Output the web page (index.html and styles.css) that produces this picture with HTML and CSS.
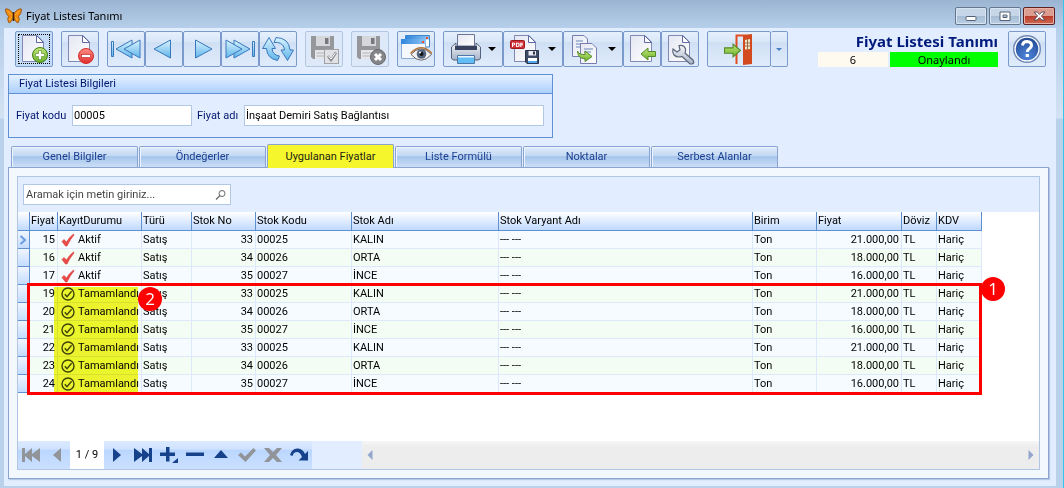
FILE: index.html
```
<!DOCTYPE html>
<html lang="tr">
<head>
<meta charset="utf-8">
<title>Fiyat Listesi Tanımı</title>
<link rel="stylesheet" href="styles.css">
</head>
<body>
<svg class="defs" width="0" height="0" aria-hidden="true">
  <defs>
    <linearGradient id="gArrow" x1="0" y1="0" x2="0" y2="1"><stop offset="0" stop-color="#d9f3ff"/><stop offset="1" stop-color="#5fb4ea"/></linearGradient>
    <linearGradient id="gPage" x1="0" y1="0" x2="1" y2="1"><stop offset="0" stop-color="#e4e6f2"/><stop offset="1" stop-color="#ffffff"/></linearGradient>
    <linearGradient id="gGreen" x1="0" y1="0" x2="0" y2="1"><stop offset="0" stop-color="#c4e878"/><stop offset="1" stop-color="#69b02c"/></linearGradient>
    <linearGradient id="gRed" x1="0" y1="0" x2="0" y2="1"><stop offset="0" stop-color="#ff8f85"/><stop offset="1" stop-color="#e02b2b"/></linearGradient>
    <linearGradient id="gSteel" x1="0" y1="0" x2="0" y2="1"><stop offset="0" stop-color="#f4f6fa"/><stop offset="1" stop-color="#a5b2c6"/></linearGradient>
    <linearGradient id="gWin" x1="0" y1="0" x2="1" y2="0"><stop offset="0" stop-color="#2f86dc"/><stop offset="1" stop-color="#8cc4f4"/></linearGradient>
    <radialGradient id="gHelp" cx=".5" cy=".8" r=".8"><stop offset="0" stop-color="#4f86dc"/><stop offset="1" stop-color="#234a94"/></radialGradient>
    <symbol id="page" viewBox="0 0 32 32"><path d="M4.500 2.500H19L25.500 9V28.500H4.500Z" fill="url(#gPage)" stroke="#8288b4"/><path d="M18.500 2.500V9.500H25.500Z" fill="#fff" stroke="#5f69a8" stroke-linejoin="round"/></symbol>
    <symbol id="arrowL" viewBox="0 0 16 14"><path d="M1 7L8 1V4.500H15.500V9.500H8V13Z" fill="url(#gGreen)" stroke="#528a2c"/></symbol>
    <symbol id="arrowR" viewBox="0 0 16 14"><path d="M15.500 7L8.500 1V4.500H.5V9.500H8.500V13Z" fill="url(#gGreen)" stroke="#528a2c"/></symbol>
    <symbol id="floppyGray" viewBox="0 0 32 32"><path d="M3 3H26V26H5L3 24Z" fill="#96979b"/><path d="M8 3H22V13H8Z" fill="#d5d7db"/><path d="M17 5H20.500V11H17Z" fill="#77787e"/><path d="M7 17H22V26H7Z" fill="#e4e6ea"/><path d="M8.500 20H20M8.500 23H20" stroke="#b4b6ba"/></symbol>
    <symbol id="redCheck" viewBox="0 0 14 14"><path d="M1 8.500L3 6.500L5.500 9Q8.500 4 12.500 1L13 2Q9 6.500 6 13H4.500Z" fill="#ea4a48" stroke="#d93a3a" stroke-width=".6"/></symbol>
    <symbol id="ringCheck" viewBox="0 0 14 14"><circle cx="7" cy="7" r="6" fill="none" stroke="#40451a" stroke-width="1.400"/><path d="M3.800 7.200L6 9.700L10.600 4.300" fill="none" stroke="#40451a" stroke-width="1.400"/></symbol>
  </defs>
</svg>

<div class="window">
  <header class="titlebar">
    <svg class="logo" viewBox="0 0 17 16"><path d="M8.500 6Q4 0 .5 1Q0 5 3.500 8.500Q1.500 11 4 15Q7 14 8.500 9Q10 14 13 15Q15.500 11 13.500 8.500Q17 5 16.500 1Q13 0 8.500 6Z" fill="#f28a10" stroke="#8a5214" stroke-width=".8"/><path d="M2.500 3L7 7M14.500 3L10 7M4.500 12L7 9M12.500 12L10 9" stroke="#ffb03a"/><path d="M8.500 4V13" stroke="#3a2208" stroke-width="1.500"/></svg>
    <h1 class="title">Fiyat Listesi Tanımı</h1>
    <div class="controls">
      <button class="ctl" aria-label="Simge durumuna küçült"><svg width="12" height="14" viewBox="0 0 12 14"><rect x="1" y="7.500" width="10" height="4" rx="1" fill="#fff" stroke="#566274"/></svg></button>
      <button class="ctl" aria-label="Ekranı kapla"><svg width="12" height="14" viewBox="0 0 12 14"><path d="M1 3H11V11.500H1ZM4 6V8.500H8V6Z" fill="#fff" fill-rule="evenodd" stroke="#566274"/></svg></button>
      <button class="ctl ctl-close" aria-label="Kapat"><svg width="13" height="14" viewBox="0 0 13 14"><path d="M1 3H4.200L6.500 5.300L8.800 3H12L8.500 7L12 11H8.800L6.500 8.700L4.200 11H1L4.500 7Z" fill="#fff" stroke="#5c4a56"/></svg></button>
    </div>
  </header>

  <main class="body">
    <div class="toolbar">
      <div class="group"><button class="tool focused" aria-label="Yeni"><svg viewBox="0 0 32 32"><use href="#page"/><circle cx="22" cy="22" r="7.500" fill="url(#gGreen)" stroke="#3f7d18"/><path d="M20.500 17.500H23.500V20.500H26.500V23.500H23.500V26.500H20.500V23.500H17.500V20.500H20.500Z" fill="#fff" stroke="#4d8a20" stroke-width=".6"/></svg></button></div>
      <div class="group"><button class="tool" aria-label="Sil"><svg viewBox="0 0 32 32"><use href="#page"/><circle cx="22" cy="23" r="7.500" fill="url(#gRed)" stroke="#d12c2c"/><rect x="17.500" y="21.500" width="9" height="3" fill="#fff" stroke="#b32020" stroke-width=".6"/></svg></button></div>
      <div class="group">
        <button class="tool" aria-label="İlk kayıt"><svg viewBox="0 0 32 32"><g fill="url(#gArrow)" stroke="#3a78bc"><path d="M1.500 8.500H3.500V23.500H1.500Z"/><path d="M22 7V25L6 16Z"/><path d="M30 7V25L14 16Z"/></g></svg></button>
        <button class="tool" aria-label="Önceki"><svg viewBox="0 0 32 32"><path d="M22.500 7V25L6 16Z" fill="url(#gArrow)" stroke="#3a78bc"/></svg></button>
        <button class="tool" aria-label="Sonraki"><svg viewBox="0 0 32 32"><path d="M9.500 7V25L26 16Z" fill="url(#gArrow)" stroke="#3a78bc"/></svg></button>
        <button class="tool" aria-label="Son kayıt"><svg viewBox="0 0 32 32"><g fill="url(#gArrow)" stroke="#3a78bc"><path d="M28.500 8.500H30.500V23.500H28.500Z"/><path d="M10 7V25L26 16Z"/><path d="M2 7V25L18 16Z"/></g></svg></button>
        <button class="tool" aria-label="Yenile"><svg viewBox="0 0 32 32"><g fill="url(#gArrow)" stroke="#3a78bc"><path d="M7 4.500L13.500 15.500H10Q10.500 22 17.500 23L15.500 27.500Q5 25.500 4.500 15.500H.5Z"/><path d="M25.500 27.500L19 17H22.500Q22 10.500 15.500 9.500H12L14 4.500Q27 5 28 17H31.500Z"/></g></svg></button>
      </div>
      <div class="group"><button class="tool" disabled aria-label="Kaydet"><svg viewBox="0 0 32 32"><use href="#floppyGray"/><rect x="16.500" y="16.500" width="14" height="14" fill="#e0e2e6" stroke="#a0a2a6"/><path d="M20 23L23 27L28 19.500" fill="none" stroke="#8b8d92" stroke-width="2.500"/><path d="M20.500 23L23 26L27.500 20" fill="none" stroke="#fff"/></svg></button></div>
      <div class="group"><button class="tool" disabled aria-label="Vazgeç"><svg viewBox="0 0 32 32"><use href="#floppyGray"/><circle cx="24" cy="24" r="7.500" fill="#85868a" stroke="#68696e"/><path d="M21 21L27 27M27 21L21 27" stroke="#fff" stroke-width="3"/></svg></button></div>
      <div class="group"><button class="tool" aria-label="İzle"><svg viewBox="0 0 32 32"><path d="M5.500 2.500H29.500V14H5.500Z" fill="#fff" stroke="#3d85ca"/><path d="M6 3H29V6.500H6Z" fill="url(#gWin)"/><path d="M1.500 6.500H25.500V25.500H1.500Z" fill="#f4f8fd" stroke="#8cacd6"/><path d="M1 6H26V11H1Z" fill="url(#gWin)"/><path d="M22 8H24V10H22ZM26 4H28V6H26Z" fill="#e6502a"/><path d="M11 21.500Q21 10 31.500 21.500Q21 33 11 21.500Z" fill="#f3f2f2" stroke="#6f6870"/><path d="M10.500 20.500Q21 9 32 20.500" fill="none" stroke="#b3753a" stroke-width="1.500"/><circle cx="21.500" cy="21" r="4.800" fill="#52647e"/><circle cx="21.500" cy="21" r="2" fill="#111"/><circle cx="20" cy="19.500" r="1" fill="#fff"/></svg></button></div>
      <div class="group">
        <button class="tool drop" aria-label="Yazdır"><svg viewBox="0 0 32 32"><path d="M1.500 14L6 10V15H26V10L30.500 14V25Q30 27 28 27H4Q2 27 1.500 25Z" fill="url(#gSteel)" stroke="#56617e"/><path d="M7.500 1.500H24.500V13H7.500Z" fill="url(#gPage)" stroke="#6c7694"/><path d="M5 13H27V17H5Z" fill="#38425e"/><path d="M7.500 22.500H24.500V30.500H7.500Z" fill="#63bdf5" stroke="#4f77a8"/><path d="M8 23H24V24.500H8Z" fill="#e8f4ff"/></svg><i class="caret"></i></button>
        <button class="tool drop" aria-label="PDF kaydet"><svg viewBox="0 0 32 32"><use href="#page"/><rect x=".5" y="7.500" width="14" height="8" rx="1" fill="#cf2f34" stroke="#9c1b20"/><text class="pdf" x="7.500" y="14">PDF</text><path d="M15.500 17.500H28.500V30.500H17L15.500 29Z" fill="#3e4964" stroke="#2b344c"/><path d="M18.500 18H26V22.500H18.500Z" fill="#e8ebf2"/><path d="M23 18.500H25V21.500H23Z" fill="#2b344c"/><path d="M18 25H27V30H18Z" fill="#fff"/><path d="M18 28H27V30H18Z" fill="#49a8ee"/></svg><i class="caret"></i></button>
        <button class="tool drop" aria-label="Kopyala"><svg viewBox="0 0 32 32"><path d="M2.500 2.500H14L17.500 6V23.500H2.500Z" fill="url(#gPage)" stroke="#777eae"/><path d="M6 8H13M6 11H12M6 14H10" stroke="#6a87b8"/><path d="M10.500 10.500H22L26.500 15V30.500H10.500Z" fill="url(#gPage)" stroke="#777eae"/><path d="M14 16H23M14 19H21" stroke="#6a87b8"/><path d="M7.500 18Q9 22 15 21.500V18L22 23.500L15 28.500V25.500Q8 26 7.500 18Z" fill="url(#gGreen)" stroke="#528a2c"/></svg><i class="caret"></i></button>
        <button class="tool" aria-label="İçe aktar"><svg viewBox="0 0 32 32"><use href="#page"/><use href="#arrowL" x="14" y="14" width="16" height="14"/></svg></button>
        <button class="tool" aria-label="Ayarlar"><svg viewBox="0 0 32 32"><use href="#page"/><path d="M9 16L13 19L16 17L15 12.500Q20 11.500 21.500 16Q22 18 21 20L29 27Q31 30 28 31H26L18 23.500Q13 25 10 22Q8 19 9 16Z" fill="url(#gSteel)" stroke="#5c667a" stroke-width="1.200"/></svg></button>
      </div>
      <div class="group split">
        <button class="tool exit" aria-label="Çıkış"><svg viewBox="0 0 32 32"><path d="M13.500 31V2.500H29" fill="none" stroke="#e04d20" stroke-width="2"/><path d="M20 3L29 1V31L20 32Z" fill="#d34a1e"/><path d="M22 7L27 6V16L22 16.500Z" fill="#f1e8c6"/><path d="M24.500 6V16.500M22 10H27M22 13H27" stroke="#9b6a4a"/><use href="#arrowR" x="1" y="10" width="17" height="15"/></svg></button>
        <button class="tool more" aria-label="Çıkış seçenekleri"><i class="caret small"></i></button>
      </div>
      <div class="status">
        <h2 class="heading">Fiyat Listesi Tanımı</h2>
        <div class="tags"><span class="tag count">6</span><span class="tag approved">Onaylandı</span></div>
      </div>
      <div class="group"><button class="tool" aria-label="Yardım"><svg viewBox="0 0 32 32"><circle cx="16" cy="16" r="13.300" fill="#fff" stroke="#6e86b4" stroke-width="1.400"/><circle cx="16" cy="16" r="11.300" fill="url(#gHelp)"/><path d="M11.500 12.500Q12 8.500 16 8.500Q20.500 8.800 20.500 12.500Q20.300 14.500 18 16Q16.300 17 16.300 19" fill="none" stroke="#fff" stroke-width="3"/><rect x="14.700" y="21" width="3.200" height="3" fill="#fff"/></svg></button></div>
    </div>

    <section class="info">
      <h3 class="info-title">Fiyat Listesi Bilgileri</h3>
      <div class="fields">
        <label class="label-code" for="kod">Fiyat kodu</label><input class="field code" id="kod" value="00005">
        <label class="label-name" for="ad">Fiyat adı</label><input class="field name" id="ad" value="İnşaat Demiri Satış Bağlantısı">
      </div>
    </section>

    <nav class="tabs">
      <button class="tab">Genel Bilgiler</button>
      <button class="tab">Öndeğerler</button>
      <button class="tab active">Uygulanan Fiyatlar</button>
      <button class="tab">Liste Formülü</button>
      <button class="tab">Noktalar</button>
      <button class="tab">Serbest Alanlar</button>
    </nav>

    <section class="sheet">
      <div class="panel">
        <div class="search">
          <input class="search-input" aria-label="Ara" placeholder="Aramak için metin giriniz...">
          <svg class="lens" viewBox="0 0 12 12"><circle cx="7" cy="4.500" r="3" fill="none" stroke="#666"/><path d="M5 6.500L1 10.500" stroke="#666" stroke-width="1.300"/></svg>
        </div>
        <div class="grid">
          <div class="grid-inner">
          <table class="table">
            <colgroup><col class="c-ind"><col class="c-no"><col class="c-state"><col class="c-type"><col class="c-sno"><col class="c-code"><col class="c-stock"><col class="c-var"><col class="c-unit"><col class="c-price"><col class="c-cur"><col class="c-vat"></colgroup>
            <thead><tr><th></th><th>Fiyat</th><th>KayıtDurumu</th><th>Türü</th><th>Stok No</th><th>Stok Kodu</th><th>Stok Adı</th><th>Stok Varyant Adı</th><th>Birim</th><th>Fiyat</th><th>Döviz</th><th>KDV</th></tr></thead>
            <tbody>
              <tr><td class="ind"><svg class="chev" viewBox="0 0 8 10"><path d="M1.500 1L6 5L1.500 9" fill="none" stroke="#6b9be0" stroke-width="2"/></svg></td><td class="num">15</td><td><span class="state"><svg><use href="#redCheck"/></svg>Aktif</span></td><td>Satış</td><td class="num">33</td><td>00025</td><td>KALIN</td><td>--- ---</td><td>Ton</td><td class="num">21.000,00</td><td>TL</td><td>Hariç</td></tr>
              <tr><td class="ind"></td><td class="num">16</td><td><span class="state"><svg><use href="#redCheck"/></svg>Aktif</span></td><td>Satış</td><td class="num">34</td><td>00026</td><td>ORTA</td><td>--- ---</td><td>Ton</td><td class="num">18.000,00</td><td>TL</td><td>Hariç</td></tr>
              <tr><td class="ind"></td><td class="num">17</td><td><span class="state"><svg><use href="#redCheck"/></svg>Aktif</span></td><td>Satış</td><td class="num">35</td><td>00027</td><td>İNCE</td><td>--- ---</td><td>Ton</td><td class="num">16.000,00</td><td>TL</td><td>Hariç</td></tr>
              <tr><td class="ind"></td><td class="num">19</td><td><span class="state"><svg><use href="#ringCheck"/></svg>Tamamlandı</span></td><td>Satış</td><td class="num">33</td><td>00025</td><td>KALIN</td><td>--- ---</td><td>Ton</td><td class="num">21.000,00</td><td>TL</td><td>Hariç</td></tr>
              <tr><td class="ind"></td><td class="num">20</td><td><span class="state"><svg><use href="#ringCheck"/></svg>Tamamlandı</span></td><td>Satış</td><td class="num">34</td><td>00026</td><td>ORTA</td><td>--- ---</td><td>Ton</td><td class="num">18.000,00</td><td>TL</td><td>Hariç</td></tr>
              <tr><td class="ind"></td><td class="num">21</td><td><span class="state"><svg><use href="#ringCheck"/></svg>Tamamlandı</span></td><td>Satış</td><td class="num">35</td><td>00027</td><td>İNCE</td><td>--- ---</td><td>Ton</td><td class="num">16.000,00</td><td>TL</td><td>Hariç</td></tr>
              <tr><td class="ind"></td><td class="num">22</td><td><span class="state"><svg><use href="#ringCheck"/></svg>Tamamlandı</span></td><td>Satış</td><td class="num">33</td><td>00025</td><td>KALIN</td><td>--- ---</td><td>Ton</td><td class="num">21.000,00</td><td>TL</td><td>Hariç</td></tr>
              <tr><td class="ind"></td><td class="num">23</td><td><span class="state"><svg><use href="#ringCheck"/></svg>Tamamlandı</span></td><td>Satış</td><td class="num">34</td><td>00026</td><td>ORTA</td><td>--- ---</td><td>Ton</td><td class="num">18.000,00</td><td>TL</td><td>Hariç</td></tr>
              <tr><td class="ind"></td><td class="num">24</td><td><span class="state"><svg><use href="#ringCheck"/></svg>Tamamlandı</span></td><td>Satış</td><td class="num">35</td><td>00027</td><td>İNCE</td><td>--- ---</td><td>Ton</td><td class="num">16.000,00</td><td>TL</td><td>Hariç</td></tr>
            </tbody>
          </table>
          <div class="marker"></div>
          <div class="frame"></div>
          <span class="badge badge-one">1</span>
          <span class="badge badge-two">2</span>
          </div>
        </div>
        <footer class="footer">
          <div class="navigator">
            <button class="nav off" aria-label="İlk"><svg viewBox="0 0 20 16"><path d="M1 1H4V7L11 1V7L19 1V15L11 9V15L4 9V15H1Z"/></svg></button>
            <button class="nav off" aria-label="Geri"><svg viewBox="0 0 20 16"><path d="M14 1V15L6 8Z"/></svg></button>
            <span class="pos">1 / 9</span>
            <button class="nav" aria-label="İleri"><svg viewBox="0 0 20 16"><path d="M6 1V15L14 8Z"/></svg></button>
            <button class="nav" aria-label="Son"><svg viewBox="0 0 20 16"><path d="M19 1H16V7L9 1V7L1 1V15L9 9V15L16 9V15H19Z"/></svg></button>
            <button class="nav" aria-label="Ekle"><svg viewBox="0 0 20 16"><path d="M7 0H10.500V5.500H16V9H10.500V14.500H7V9H1V5.500H7ZM19 11V16H13Z"/></svg></button>
            <button class="nav" aria-label="Çıkar"><svg viewBox="0 0 20 16"><path d="M1 5.500H19V9H1Z"/></svg></button>
            <button class="nav" aria-label="Düzenle"><svg viewBox="0 0 20 16"><path d="M10 3L17 11H3Z"/></svg></button>
            <button class="nav off" aria-label="Onayla"><svg viewBox="0 0 20 16"><path d="M1 8L4 5.500L8 9.500L16.500 1L19 3.500L8.500 15Z"/></svg></button>
            <button class="nav off" aria-label="İptal"><svg viewBox="0 0 20 16"><path d="M1 1H6L10 5L14 1H19L13 8L19 15H14L10 11L6 15H1L7 8Z"/></svg></button>
            <button class="nav" aria-label="Yenile"><svg viewBox="0 0 20 16"><path d="M1 8Q3 1 9 1.500Q14 2 16 7L19 4V13.500H9.500L13 10Q11 5 8 5Q4.500 5 3.500 9Z"/></svg></button>
          </div>
          <div class="scroll"><svg viewBox="0 0 6 10"><path d="M5.500 0V10L.5 5Z"/></svg><svg viewBox="0 0 6 10"><path d="M.5 0V10L5.500 5Z"/></svg></div>
        </footer>
      </div>
    </section>
  </main>
</div>
</body>
</html>
```

FILE: styles.css
```
* { box-sizing: border-box; }
body {
  margin: 0;
  font: 11px/16px Roboto, "Noto Sans", sans-serif;
  color: #000;
}
button, input { font: inherit; color: inherit; margin: 0; padding: 0; border-radius: 0; }
h1, h2, h3 { margin: 0; font-weight: normal; }
svg { display: block; flex: none; }
.defs { position: absolute; }

.window {
  min-height: 100vh;
  display: flex;
  flex-direction: column;
  padding: 0 7px 2px 4px;
  border-right: 1px solid #35c4ea;
  background: linear-gradient(#9ab4d2, #b6cfea 28px, #d3e2f3 118px, #b9d1ea 119px);
}
.titlebar { display: flex; align-items: center; height: 28px; padding: 4px 1px 0 1px; }
.logo { width: 17px; height: 16px; }
.title { flex: 1; margin-left: 4px; font: 11px/16px "Noto Sans", sans-serif; }
.controls { display: flex; gap: 2px; }
.ctl {
  display: flex; align-items: center; justify-content: center;
  width: 32px; height: 18px;
  border: 1px solid #66768c; border-radius: 2px;
  background: linear-gradient(#c6d6e8 50%, #a5bcd4 50%, #b9cee4);
  box-shadow: inset 0 0 0 1px #d9e5f2;
}
.ctl-close {
  border-color: #5a2022;
  background: linear-gradient(#dc9c90 50%, #b83a2a 50%, #cf6a50);
  box-shadow: inset 0 0 0 1px #e8b0a6;
}

.body { flex: 1; display: flex; flex-direction: column; padding: 3px 7px 7px 4px; background: #e2eeff; }

.toolbar { display: flex; gap: 8px; padding: 0 3px 0 7px; }
.group { display: flex; flex: none; height: 36px; }
.tool {
  display: flex; align-items: center; justify-content: center;
  width: 38px; height: 36px;
  border: 1px solid #7a9acb; border-radius: 2px;
  background: linear-gradient(#e6f0fd, #d9e7f8 28%, #cfdff4 29%, #e0ecfb);
}
.tool svg { width: 32px; height: 32px; }
.tool:disabled { border-color: #b4c6e2; background: #dde9f9; }
.focused { background: #c5dcf6; outline: 1px dotted #000; outline-offset: -4px; }
.drop { width: 60px; gap: 6px; }
.exit { width: 64px; }
.more { width: 17px; border-left: 0; }
.caret { border: 4px solid transparent; border-top-color: #000; border-bottom: 0; }
.small { border-width: 3px; border-bottom: 0; border-top-color: #4a7fc0; }
.pdf { font: bold 6px "DejaVu Sans Condensed", sans-serif; fill: #fff; text-anchor: middle; }
.status { margin-left: auto; margin-right: 2px; text-align: right; }
.heading { font: bold 15px/21px "Noto Sans", sans-serif; color: #001a7c; }
.tags { display: flex; gap: 2px; font: 11px/15px "Noto Sans", sans-serif; text-align: center; }
.tag { height: 15px; }
.count { width: 70px; background: #fffaf0; }
.approved { width: 108px; background: #00ff00; }

.info { width: 545px; max-width: 100%; margin-top: 7px; border: 1px solid #5f91d0; color: #00156e; }
.info-title {
  height: 19px; padding-left: 10px; font-size: 11px; line-height: 18px;
  border-bottom: 1px solid #5f91d0;
  background: linear-gradient(#e6f1ff, #acd0ff);
}
.fields { display: flex; align-items: center; height: 43px; padding: 0 8px 0 7px; }
.label-code { width: 51px; }
.label-name { width: 42px; }
.field { height: 21px; padding: 0 1px; border: 1px solid #b2c6e6; background: #fff; color: #000; }
.code { width: 120px; margin: 0 5px; }
.name { flex: 1; min-width: 0; margin-left: 5px; }

.tabs { display: flex; align-items: flex-end; gap: 1px; height: 29px; padding-left: 3px; }
.tab {
  width: 127px; height: 21px;
  border: 1px solid #8ba3cf; border-bottom: 0; border-radius: 2px 2px 0 0;
  background: linear-gradient(#dfebfa, #c3d8f3 45%, #a5c5ec 48%, #cbdef6);
  box-shadow: inset 1px 1px #eff5fd;
  color: #1b3f8f;
}
.active { height: 24px; margin-bottom: -1px; z-index: 1; background: #f5f72c; box-shadow: none; color: #1c2413; }

.sheet {
  flex: 1; display: flex; padding: 8px;
  border: 1px solid #8ba3cf; background: #f3f8ff;
  box-shadow: 1px 1px 1px #b5c8e4;
}
.panel { flex: 1; min-width: 0; display: flex; flex-direction: column; border: 1px solid #b0c6e4; background: #e2eeff; }
.search {
  display: flex; align-items: center;
  width: 208px; height: 21px; margin: 7px 5px; padding-right: 3px;
  border: 1px solid #b2c6e6; background: #fff;
}
.search-input { flex: 1; min-width: 0; border: 0; padding-left: 2px; background: none; outline: 0; }
.search-input::placeholder { color: #444; opacity: 1; }
.lens { width: 12px; height: 12px; }

.grid { flex: 1; background: #fff; }
.grid-inner { position: relative; width: 964px; }
.table { width: 100%; table-layout: fixed; border-collapse: separate; border-spacing: 0; }
.c-ind { width: 12px; } .c-no { width: 28px; } .c-state { width: 84px; }
.c-type { width: 50px; } .c-sno { width: 64px; } .c-code { width: 96px; }
.c-stock { width: 147px; } .c-var { width: 254px; } .c-unit { width: 64px; }
.c-price { width: 85px; } .c-cur { width: 35px; } .c-vat { width: 45px; }
th, td { padding: 0 1px; white-space: nowrap; text-align: left; font-weight: normal; overflow: hidden; line-height: 17px; }
th { height: 19px; line-height: 18px; border-right: 1px solid #5f91d0; border-bottom: 1px solid #5f91d0; background: linear-gradient(#fff, #bfd9ff); }
td { height: 18px; border-right: 1px solid #dde9fb; border-bottom: 1px solid #dde9fb; background: #f5fbff; }
tr:nth-child(even) td { background: #f4fdf3; }
.num { text-align: right; padding-right: 2px; }
tr .ind, tr:nth-child(even) .ind { border-color: #5f91d0; background: linear-gradient(#f0f6ff, #c4dcff); }
.chev { width: 8px; height: 10px; }
.state { display: flex; align-items: center; gap: 3px; padding-left: 2px; }
.state svg { width: 14px; height: 14px; }

/* Annotations over the grid */
.marker { position: absolute; left: 36px; top: 75px; width: 84px; height: 105px; background: #f6f72e; mix-blend-mode: multiply; }
.frame { position: absolute; left: 9px; top: 71px; right: 0; height: 112px; border: 3px solid #f00; }
.badge {
  position: absolute; width: 24px; height: 24px; border-radius: 50%;
  background: #f00; color: #fff; text-align: center; font: 17px/24px "Open Sans", sans-serif;
}
.badge-one { left: 963px; top: 65px; }
.badge-two { left: 120px; top: 75px; }

.footer { display: flex; height: 28px; }
.navigator { display: flex; align-items: center; width: 294px; background: linear-gradient(#dceaff, #cfe2ff 30%, #bad6ff 31%, #cbe0ff); }
.nav { display: flex; align-items: center; justify-content: center; width: 26px; height: 28px; border: 0; background: none; }
.nav svg { width: 20px; height: 16px; fill: #15428b; }
.off svg { fill: #919499; }
.pos { width: 34px; line-height: 28px; text-align: center; background: #fff; }
.scroll { flex: 1; display: flex; align-items: center; justify-content: space-between; margin-left: 50px; padding: 0 5px; background: linear-gradient(#f6f6f6, #ededed 20%); }
.scroll svg { width: 6px; height: 10px; fill: #93a6cd; }
```
